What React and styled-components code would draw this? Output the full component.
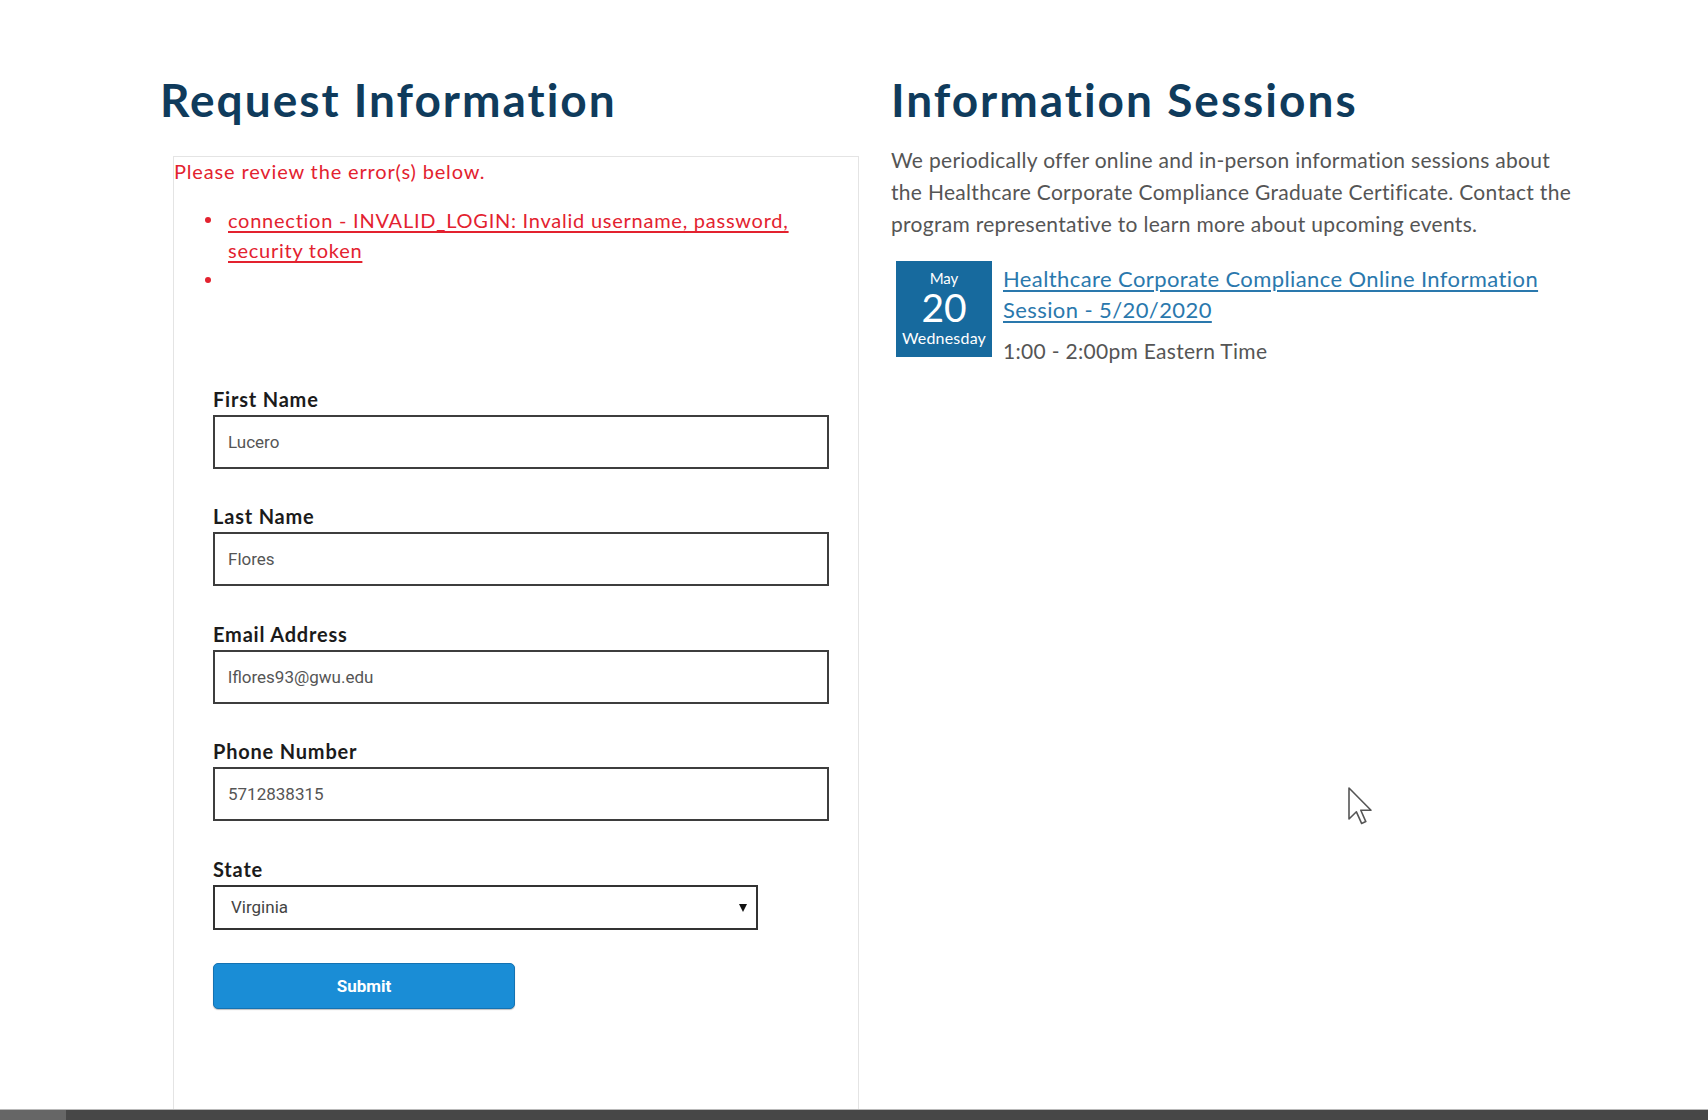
import styled, { createGlobalStyle } from "styled-components";

const GlobalStyle = createGlobalStyle`
  html, body {
    margin: 0;
    padding: 0;
    background: #fff;
  }
  body {
    font-family: Lato, "Open Sans", sans-serif;
    color: #555;
  }
`;

const colors = {
  navy: "#0f3b5c",
  red: "#e3222f",
  link: "#2a78ad",
  text: "#555",
  dateBox: "#176a9e",
  button: "#1a8dd6",
};

const Page = styled.div`
  height: 100vh;
  display: flex;
  flex-direction: column;
  overflow: hidden;
  position: relative;
`;

const Main = styled.main`
  flex: 1;
  min-height: 0;
  display: grid;
  grid-template-columns: 700px 720px;
  column-gap: 31px;
  padding: 74px 0 0 160px;
`;

const Column = styled.section`
  display: flex;
  flex-direction: column;
  min-height: 0;
`;

const Heading = styled.h1`
  margin: 0;
  font-family: Lato, sans-serif;
  font-weight: 700;
  font-size: 46px;
  line-height: 52px;
  letter-spacing: 2px;
  color: ${colors.navy};
`;

const FormBox = styled.div`
  flex: 1;
  margin: 30px 0 0 13px;
  width: 686px;
  box-sizing: border-box;
  border: 1px solid #e4e4e4;
  border-bottom: none;
  padding: 1px 0 0 0;
`;

const ErrorTitle = styled.div`
  color: ${colors.red};
  font-size: 20px;
  line-height: 26px;
  letter-spacing: 0.85px;
`;

const ErrorList = styled.ul`
  margin: 21px 0 0;
  padding-left: 54px;
  list-style: none;
  color: ${colors.red};
  font-size: 20px;
  line-height: 30px;
  letter-spacing: 0.75px;
`;

const ErrorItem = styled.li`
  position: relative;
  &::before {
    content: "";
    position: absolute;
    left: -23px;
    top: 12px;
    width: 6px;
    height: 6px;
    border-radius: 50%;
    background: ${colors.red};
  }
`;

const ErrorLink = styled.a`
  color: ${colors.red};
  text-decoration: underline;
  text-underline-offset: 3px;
`;

const Form = styled.form`
  margin: 92px 0 0 39px;
  display: flex;
  flex-direction: column;
`;

const Field = styled.div`
  display: flex;
  flex-direction: column;
  gap: 4px;
  margin-bottom: ${(p) => (p.$tight ? "33px" : "35.4px")};
`;

const Label = styled.label`
  font-family: Lato, sans-serif;
  font-weight: 700;
  font-size: 20px;
  line-height: 24px;
  letter-spacing: 0.8px;
  color: #1b1b1b;
`;

const TextInput = styled.input`
  box-sizing: border-box;
  width: 616px;
  height: 54px;
  border: 2px solid #3d3d3d;
  border-radius: 0;
  padding: 0 13px;
  font-family: Roboto, "Liberation Sans", sans-serif;
  font-size: 17px;
  color: #555;
  background: #fff;
  outline: none;
`;

const SelectWrap = styled.div`
  position: relative;
  width: 545px;
  &::after {
    content: "";
    position: absolute;
    right: 11px;
    top: 19px;
    border-left: 4px solid transparent;
    border-right: 4px solid transparent;
    border-top: 8px solid #111;
  }
`;

const Select = styled.select`
  box-sizing: border-box;
  width: 100%;
  height: 45px;
  border: 2px solid #333;
  border-radius: 0;
  padding: 0 16px;
  appearance: none;
  font-family: Roboto, "Liberation Sans", sans-serif;
  font-size: 17px;
  color: #444;
  background: #fff;
`;

const SubmitButton = styled.button`
  width: 302px;
  height: 46px;
  background: ${colors.button};
  border: 1px solid #1472b2;
  border-radius: 5px;
  color: #fff;
  font-family: Roboto, "Liberation Sans", sans-serif;
  font-weight: 700;
  font-size: 17px;
  box-shadow: 0 1px 1px rgba(0, 0, 0, 0.25);
  cursor: pointer;
`;

const Intro = styled.p`
  margin: 18px 0 0;
  font-size: 21px;
  line-height: 32px;
  letter-spacing: 0.3px;
  color: ${colors.text};
  white-space: nowrap;
`;

const EventRow = styled.div`
  display: flex;
  align-items: flex-start;
  gap: 11px;
  margin: 21px 0 0 5px;
`;

const DateBox = styled.div`
  width: 96px;
  height: 96px;
  flex-shrink: 0;
  background: ${colors.dateBox};
  color: #fff;
  display: flex;
  flex-direction: column;
  align-items: center;
  padding-top: 8px;
  box-sizing: border-box;
`;

const DateMonth = styled.div`
  font-size: 15px;
  line-height: 18px;
`;

const DateDay = styled.div`
  font-size: 39px;
  line-height: 40px;
`;

const DateWeekday = styled.div`
  font-size: 16px;
  line-height: 22px;
  letter-spacing: 0.2px;
`;

const EventInfo = styled.div`
  display: flex;
  flex-direction: column;
  padding-top: 2px;
`;

const EventLink = styled.a`
  color: ${colors.link};
  font-size: 22px;
  line-height: 31px;
  letter-spacing: 0.4px;
  text-decoration: underline;
  text-underline-offset: 3px;
`;

const EventTime = styled.div`
  margin-top: 10px;
  font-size: 21px;
  line-height: 32px;
  letter-spacing: 0.3px;
  color: ${colors.text};
`;

const ScrollBar = styled.div`
  height: 10px;
  flex-shrink: 0;
  background: #474747;
  border-top: 1px solid #b9b9b9;
  display: flex;
`;

const ScrollThumb = styled.div`
  width: 66px;
  background: #666;
`;

const Cursor = styled.svg`
  position: absolute;
  left: 1348px;
  top: 787px;
`;

const fields = [
  { label: "First Name", value: "Lucero" },
  { label: "Last Name", value: "Flores" },
  { label: "Email Address", value: "lflores93@gwu.edu" },
  { label: "Phone Number", value: "5712838315" },
];

export default function App() {
  return (
    <Page>
      <GlobalStyle />
      <Main>
        <Column>
          <Heading>Request Information</Heading>
          <FormBox>
            <ErrorTitle>Please review the error(s) below.</ErrorTitle>
            <ErrorList>
              <ErrorItem>
                <ErrorLink href="#">
                  connection - INVALID_LOGIN: Invalid username, password,
                  security token
                </ErrorLink>
              </ErrorItem>
              <ErrorItem>&nbsp;</ErrorItem>
            </ErrorList>
            <Form onSubmit={(e) => e.preventDefault()}>
              {fields.map((f) => (
                <Field key={f.label}>
                  <Label>{f.label}</Label>
                  <TextInput defaultValue={f.value} />
                </Field>
              ))}
              <Field $tight>
                <Label>State</Label>
                <SelectWrap>
                  <Select defaultValue="VA">
                    <option value="VA">Virginia</option>
                  </Select>
                </SelectWrap>
              </Field>
              <div>
                <SubmitButton type="submit">Submit</SubmitButton>
              </div>
            </Form>
          </FormBox>
        </Column>
        <Column>
          <Heading>Information Sessions</Heading>
          <Intro>
            We periodically offer online and in-person information sessions about
            <br />
            the Healthcare Corporate Compliance Graduate Certificate. Contact the
            <br />
            program representative to learn more about upcoming events.
          </Intro>
          <EventRow>
            <DateBox>
              <DateMonth>May</DateMonth>
              <DateDay>20</DateDay>
              <DateWeekday>Wednesday</DateWeekday>
            </DateBox>
            <EventInfo>
              <EventLink href="#">
                Healthcare Corporate Compliance Online Information
                <br />
                Session - 5/20/2020
              </EventLink>
              <EventTime>1:00 - 2:00pm Eastern Time</EventTime>
            </EventInfo>
          </EventRow>
        </Column>
      </Main>
      <ScrollBar>
        <ScrollThumb />
      </ScrollBar>
      <Cursor width="26" height="38" viewBox="0 0 13 19">
        <path
          d="M0.5 0.5 L0.5 16 L4.2 12.4 L6.8 18.2 L8.9 17.3 L6.4 11.6 L11.5 11.6 Z"
          fill="#fff"
          stroke="#555"
          strokeWidth="0.8"
          strokeLinejoin="round"
        />
      </Cursor>
    </Page>
  );
}
